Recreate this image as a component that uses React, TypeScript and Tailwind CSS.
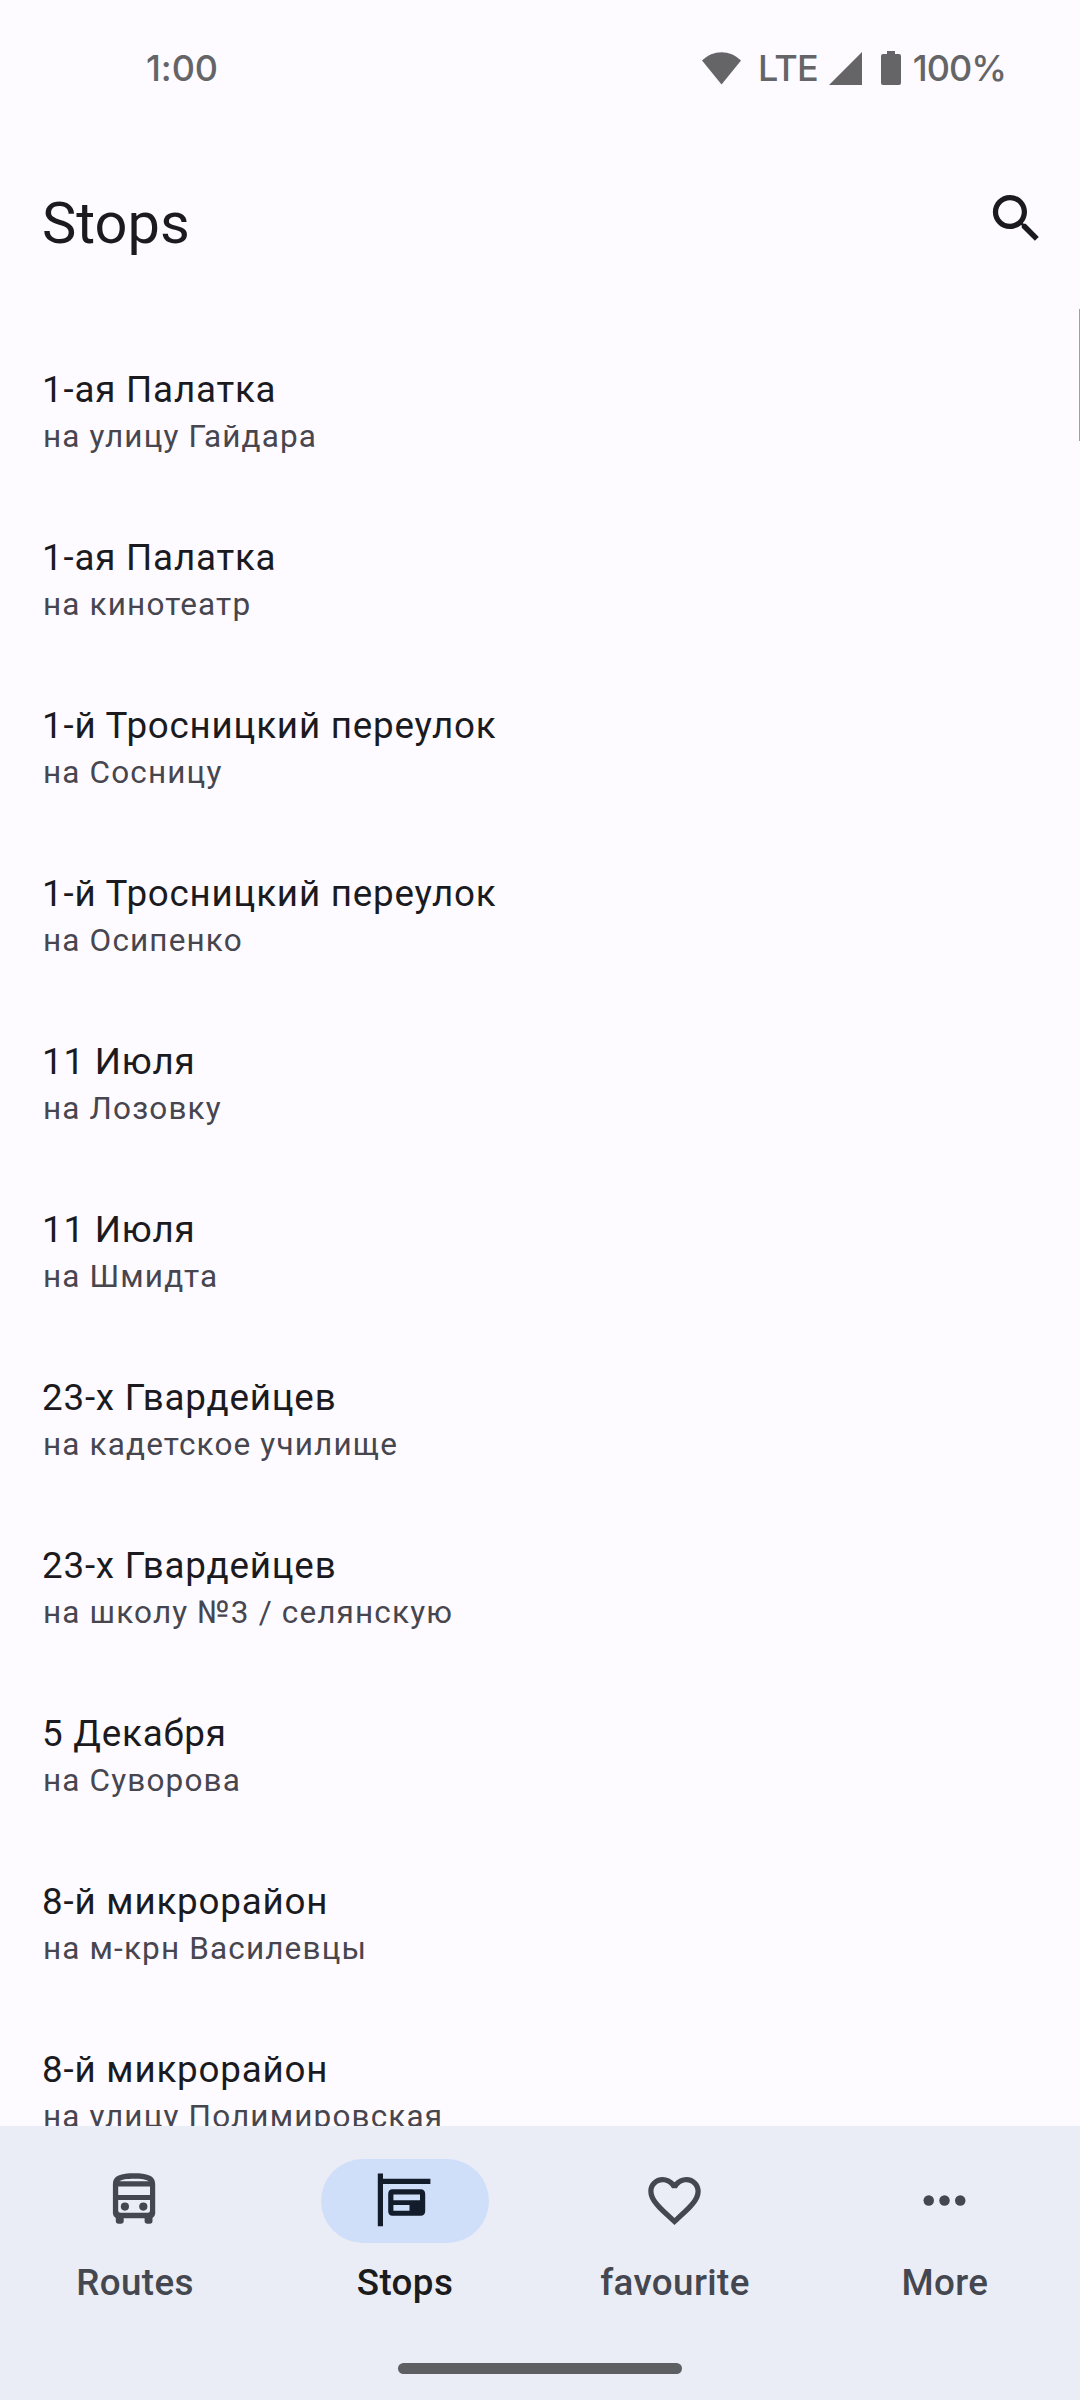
import React from "react";

const stops: [string, string][] = [
  ["1-ая Палатка", "на улицу Гайдара"],
  ["1-ая Палатка", "на кинотеатр"],
  ["1-й Тросницкий переулок", "на Сосницу"],
  ["1-й Тросницкий переулок", "на Осипенко"],
  ["11 Июля", "на Лозовку"],
  ["11 Июля", "на Шмидта"],
  ["23-х Гвардейцев", "на кадетское училище"],
  ["23-х Гвардейцев", "на школу №3 / селянскую"],
  ["5 Декабря", "на Суворова"],
  ["8-й микрорайон", "на м-крн Василевцы"],
  ["8-й микрорайон", "на улицу Полимировская"],
];

function StatusBar() {
  return (
    <div className="flex h-[136px] shrink-0 items-center justify-between pl-[146px] pr-[74px] font-[Inter,sans-serif] text-[36px] font-medium leading-[40px] text-[#656567]">
      <span className="tracking-[-0.1px]">1:00</span>
      <div className="flex items-center">
        <svg className="mr-[17px] h-[33px] w-[39px]" viewBox="0 0 39 33" fill="currentColor">
          <path d="M0 8.5C11-2.6 28-2.6 39 8.5L19.5 32.5Z" />
        </svg>
        <span className="tracking-[-0.8px]">LTE</span>
        <svg className="ml-[11px] h-[33px] w-[33px]" viewBox="0 0 33 33" fill="currentColor">
          <path d="M0 33H33V0Z" />
        </svg>
        <svg className="ml-[19px] mr-[12px] h-[34px] w-[20px]" viewBox="0 0 20 34" fill="currentColor">
          <path d="M6 0H14V3H18Q20 3 20 5V32Q20 34 18 34H2Q0 34 0 32V5Q0 3 2 3H6Z" />
        </svg>
        <span className="tracking-[-1px]">100%</span>
      </div>
    </div>
  );
}

function RoutesIcon() {
  return (
    <svg className="size-[63px]" viewBox="0 0 63 63" fill="currentColor">
      <path
        fillRule="evenodd"
        d="M9.9 15C9.9 6.5 18 4.3 31 4.3S52.2 6.5 52.2 15V44.5Q52.2 47 49.5 49V52Q49.5 54.8 46.8 54.8H44.4Q41.6 54.8 41.6 52V49.3H20.7V52Q20.7 54.8 17.9 54.8H15.5Q12.8 54.8 12.8 52V49Q9.9 47 9.9 44.5ZM16.5 12.3H45.8C42.5 9 19.5 9 16.5 12.3ZM15.2 17.5V25.9H47V17.5ZM15.2 31V41.5Q15.2 43.8 17.5 43.8H44.7Q47 43.8 47 41.5V31Z"
      />
      <circle cx="21.9" cy="37.6" r="4.1" />
      <circle cx="40.3" cy="37.6" r="4.1" />
    </svg>
  );
}

function StopsIcon() {
  return (
    <svg className="size-[63px]" viewBox="0 0 63 63" fill="currentColor">
      <path d="M4.8 4.6H10V9.8H57.4V15.1H10V57.2H4.8Z" />
      <path
        fillRule="evenodd"
        d="M19.5 20.3H47.5Q52.2 20.3 52.2 25V42Q52.2 46.8 47.5 46.8H19.5Q15.2 46.8 15.2 42V25Q15.2 20.3 19.5 20.3ZM20.4 25.5V31.2H47V25.5ZM20.4 36.1V41.8H36.5V36.1Z"
      />
    </svg>
  );
}

function HeartIcon() {
  return (
    <svg className="size-[63px]" viewBox="0 0 24 24" fill="currentColor">
      <path d="M16.5 3c-1.74 0-3.41.81-4.5 2.09C10.91 3.81 9.24 3 7.5 3 4.42 3 2 5.42 2 8.5c0 3.78 3.4 6.86 8.55 11.54L12 21.35l1.45-1.32C18.6 15.36 22 12.28 22 8.5 22 5.42 19.58 3 16.5 3zm-4.4 15.55l-.1.1-.1-.1C7.14 14.24 4 11.39 4 8.5 4 6.5 5.5 5 7.5 5c1.54 0 3.04.99 3.57 2.36h1.87C13.46 5.99 14.96 5 16.5 5c2 0 3.5 1.5 3.5 3.5 0 2.89-3.14 5.74-7.9 10.05z" />
    </svg>
  );
}

function MoreIcon() {
  return (
    <svg className="size-[63px]" viewBox="0 0 24 24" fill="currentColor">
      <circle cx="6" cy="12" r="2" />
      <circle cx="12" cy="12" r="2" />
      <circle cx="18" cy="12" r="2" />
    </svg>
  );
}

function NavItem({ label, icon, active = false }: { label: string; icon: React.ReactNode; active?: boolean }) {
  return (
    <button className={active ? "flex flex-1 flex-col items-center text-[#1b1b1d]" : "flex flex-1 flex-col items-center text-[#44474f]"}>
      <span
        className={
          active
            ? "flex h-[84px] w-[168px] items-center justify-center rounded-full bg-[#cfdff9] pb-px pr-px text-[#121c2b]"
            : "flex h-[84px] w-[168px] items-center justify-center pb-px pr-px"
        }
      >
        {icon}
      </span>
      <span className="mt-[14px] text-[36.75px] font-medium leading-[52px] tracking-[0.4px]">{label}</span>
    </button>
  );
}

export default function App() {
  return (
    <div className="flex h-[2400px] w-[1080px] flex-col overflow-hidden bg-[#fdfbff] font-[Roboto,sans-serif] text-[#1b1b1f]">
      <StatusBar />
      <header className="flex h-[173px] shrink-0 items-start justify-between pl-[42px] pr-[32px]">
        <h1 className="mt-[50px] text-[57.75px] leading-[74px]">Stops</h1>
        <button className="mt-[51px]">
          <svg className="size-[63px]" viewBox="0 0 24 24" fill="currentColor">
            <path d="M15.5 14h-.79l-.28-.27C15.41 12.59 16 11.11 16 9.5 16 5.91 13.09 3 9.5 3S3 5.91 3 9.5 5.91 16 9.5 16c1.61 0 3.09-.59 4.23-1.57l.27.28v.79l5 4.99L20.49 19l-4.99-5zm-6 0C7.01 14 5 11.99 5 9.5S7.01 5 9.5 5 14 7.01 14 9.5 11.99 14 9.5 14z" />
          </svg>
        </button>
      </header>
      <main className="relative min-h-0 flex-1 overflow-hidden">
        <ul>
          {stops.map(([name, direction], i) => (
            <li key={i} className="h-[168px] pl-[42px] pt-[55px]">
              <div className="text-[36.75px] leading-[52px] tracking-[0.8px]">{name}</div>
              <div className="pl-px text-[31.5px] leading-[42px] tracking-[1.15px] text-[#47464f]">{direction}</div>
            </li>
          ))}
        </ul>
        <div className="absolute right-0 top-0 h-[132px] w-px bg-[#a0a0a2]" />
      </main>
      <nav className="flex h-[274px] shrink-0 flex-col items-center bg-[#eaedf6]">
        <div className="flex w-full pt-[33px]">
          <NavItem label="Routes" icon={<RoutesIcon />} />
          <NavItem label="Stops" icon={<StopsIcon />} active />
          <NavItem label="favourite" icon={<HeartIcon />} />
          <NavItem label="More" icon={<MoreIcon />} />
        </div>
        <div className="mt-auto mb-[26px] h-[11px] w-[284px] rounded-full bg-[#5e5f63]" />
      </nav>
    </div>
  );
}
